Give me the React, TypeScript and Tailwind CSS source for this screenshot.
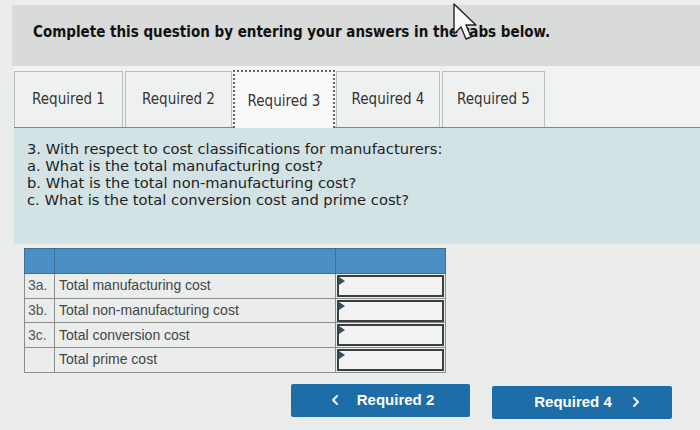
import { ChevronLeft, ChevronRight } from 'lucide-react';

const tabs = [
  { label: 'Required 1', w: 'w-[109px] mr-[2px]' },
  { label: 'Required 2', w: 'w-[107px] mr-[1px]' },
  { label: 'Required 3', w: 'w-[102px] mr-[1px]' },
  { label: 'Required 4', w: 'w-[104px] mr-[2px]' },
  { label: 'Required 5', w: 'w-[103px]' },
];

const rows = [
  { code: '3a.', label: 'Total manufacturing cost' },
  { code: '3b.', label: 'Total non-manufacturing cost' },
  { code: '3c.', label: 'Total conversion cost' },
  { code: '', label: 'Total prime cost' },
];

function Cursor() {
  return (
    <svg className="absolute left-[452px] top-[3px]" width="26" height="40" viewBox="0 0 26 40">
      <path d="M2 1 L2 31 L9 24 L14 36 L19 34 L14 22 L24 22 Z" fill="#fafafa" stroke="#222" strokeWidth="1.4" strokeLinejoin="round" />
    </svg>
  );
}

export default function App() {
  return (
    <div className="relative w-[700px] h-[430px] overflow-hidden bg-[#eaedec] pt-[5px] font-['DejaVu_Sans_Condensed','DejaVu_Sans',sans-serif]">
      <div className="ml-[12px] h-[61px] bg-[#d8dbd9] pl-[21px] pt-[16px]">
        <h1 className="text-[15px] font-bold text-[#111]">
          Complete this question by entering your answers in the tabs below.
        </h1>
      </div>

      <div className="ml-[14px] flex h-[61px] items-end bg-[#f1f3f2] pt-[4px]">
        {tabs.map((t, i) =>
          i === 2 ? (
            <div
              key={t.label}
              className={`relative z-10 -mb-px flex h-[58px] items-center justify-center border-2 border-b-0 border-dotted border-[#666] bg-[#fafafa] pt-[2px] text-[15px] text-[#333] ${t.w}`}
            >
              {t.label}
            </div>
          ) : (
            <div
              key={t.label}
              className={`flex h-[56px] items-center justify-center border border-b-0 border-[#b9bdbb] bg-[#eff1f0] text-[15px] text-[#333] ${t.w}`}
            >
              {t.label}
            </div>
          )
        )}
      </div>

      <div className="ml-[14px] h-[117px] border-t border-[#7d8a8a] bg-[#d3e2e4] pl-[13px] pt-[12px] font-['DejaVu_Sans',sans-serif] text-[14.7px] leading-[17.1px] text-[#222]">
        <p>3. With respect to cost classifications for manufacturers:</p>
        <p>a. What is the total manufacturing cost?</p>
        <p>b. What is the total non-manufacturing cost?</p>
        <p>c. What is the total conversion cost and prime cost?</p>
      </div>

      <table className="ml-[24px] mt-[4px] w-[422px] border-collapse font-['Liberation_Sans',Arial,sans-serif] text-[14px] text-[#444]">
        <thead>
          <tr className="h-[25px] bg-[#4a8fc6]">
            <th className="w-[30px] border border-[#3f6f93]" />
            <th className="w-[281px] border border-[#3f6f93]" />
            <th className="border border-[#3f6f93]" />
          </tr>
        </thead>
        <tbody>
          {rows.map((r) => (
            <tr key={r.label} className="h-[24.7px]">
              <td className="border border-[#8d8f8e] pl-[3px] text-[#555]">{r.code}</td>
              <td className="border border-[#8d8f8e] pl-[4px]">{r.label}</td>
              <td className="border border-[#8d8f8e] p-0">
                <div className="relative mx-[1px] h-[22px] border-2 border-[#3a3f42] bg-[#f2f3f2]">
                  <span className="absolute left-0 top-0 h-0 w-0 border-y-[4px] border-l-[6px] border-y-transparent border-l-[#2d5566]" />
                </div>
              </td>
            </tr>
          ))}
        </tbody>
      </table>

      <div className="ml-[291px] mt-[11px] flex gap-[22px] font-['Liberation_Sans',Arial,sans-serif] text-[15px] font-bold text-white">
        <button className="flex h-[33px] w-[179px] items-center justify-center gap-[14px] rounded-[2px] bg-[#1d6ea8]">
          <ChevronLeft size={16} strokeWidth={3} />
          Required 2
        </button>
        <button className="mt-[2px] flex h-[33px] w-[180px] items-center justify-center gap-[16px] rounded-[2px] bg-[#1d6ea8] pl-[14px]">
          Required 4
          <ChevronRight size={16} strokeWidth={3} />
        </button>
      </div>

      <Cursor />
    </div>
  );
}
